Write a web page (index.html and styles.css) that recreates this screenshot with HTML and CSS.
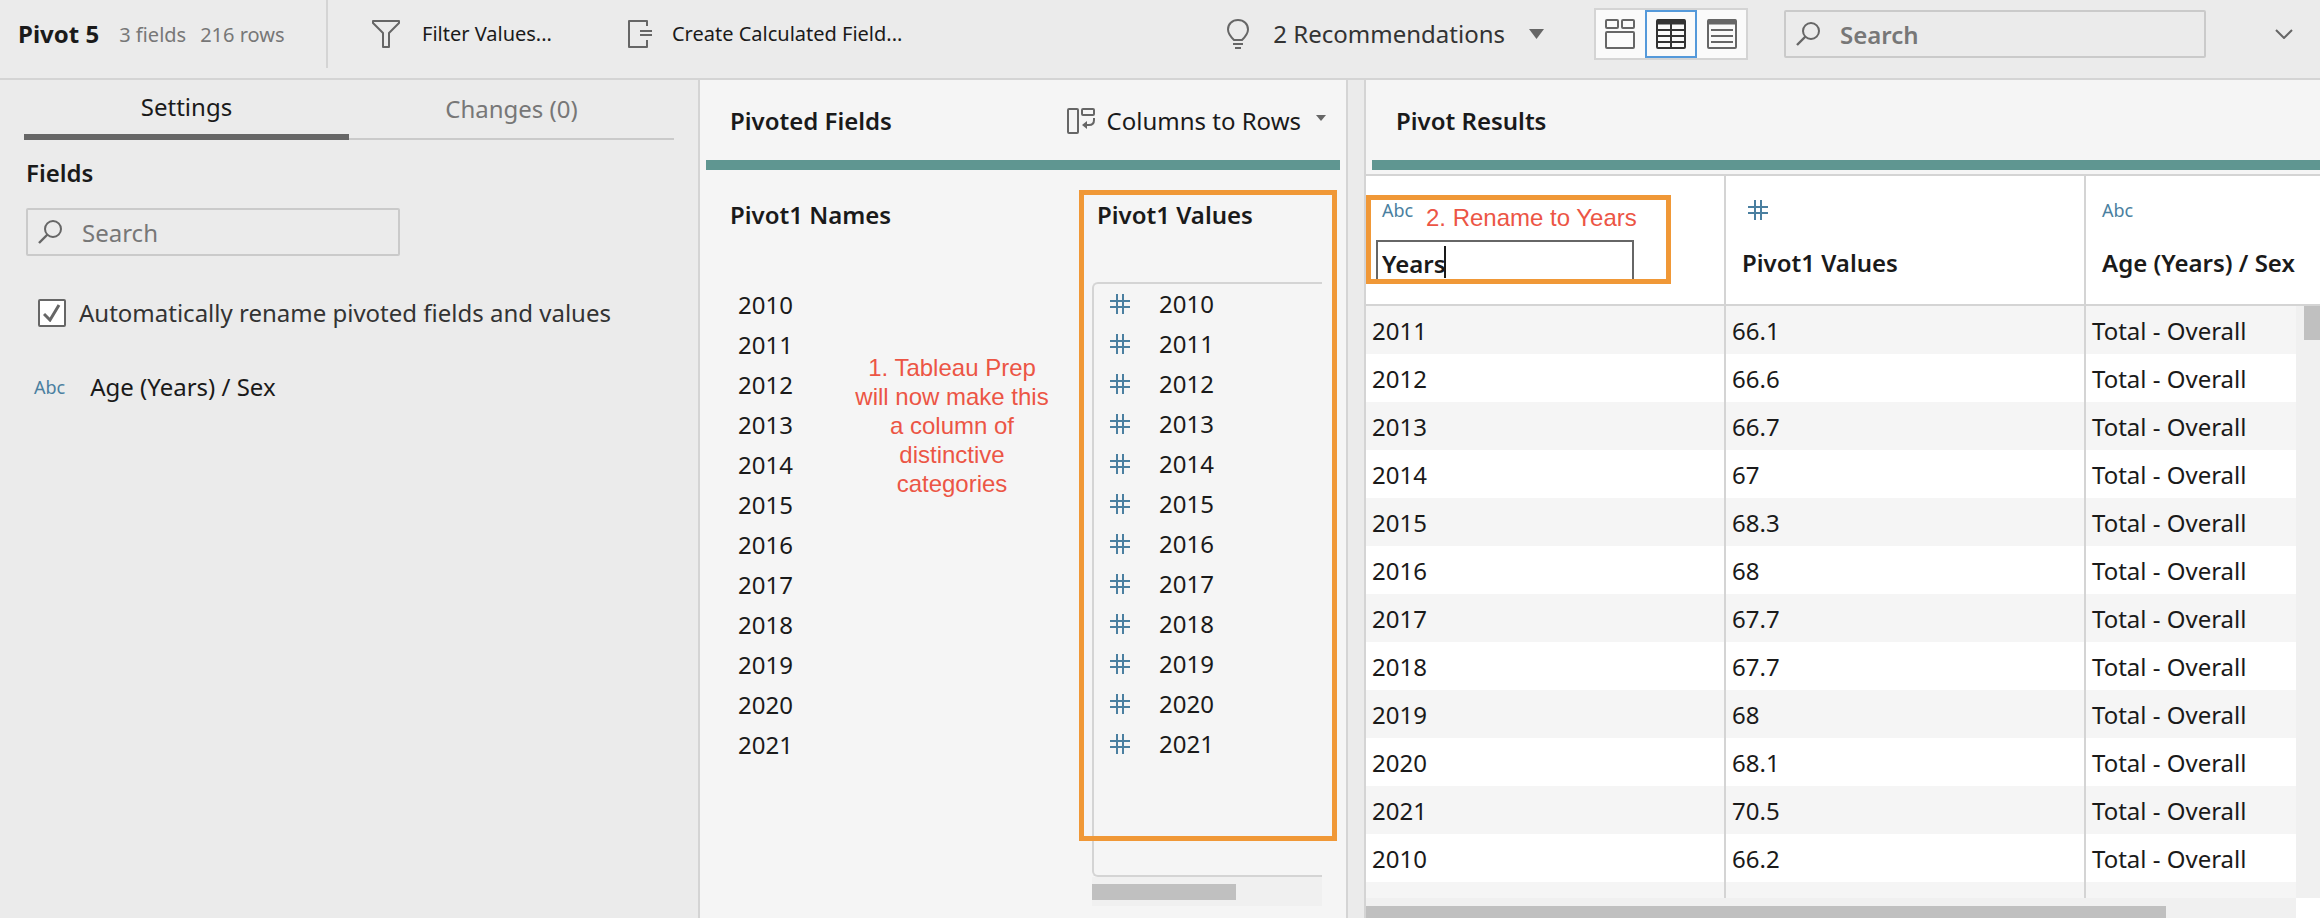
FILE: index.html
```html
<!DOCTYPE html>
<html lang="en">
<head>
<meta charset="utf-8">
<title>Pivot 5</title>
<link rel="stylesheet" href="styles.css">
</head>
<body>
<svg class="defs" aria-hidden="true">
  <symbol id="hash" viewBox="0 0 20 20"><path d="M7 0v20M13 0v20M0 7h20M0 13h20" fill="none" stroke="currentColor" stroke-width="2"/></symbol>
  <symbol id="lens" viewBox="0 0 24 24"><circle cx="15" cy="9" r="8" fill="none" stroke="currentColor" stroke-width="2"/><path d="M9.5 14.5 1 23" stroke="currentColor" stroke-width="2.4"/></symbol>
</svg>

<header class="toolbar">
  <div class="summary">
    <h1 class="title">Pivot 5</h1>
    <span class="stat">3 fields</span>
    <span class="stat">216 rows</span>
  </div>
  <button class="tool tool-filter" type="button">
    <svg width="28" height="28" viewBox="0 0 28 28" fill="none" stroke="currentColor" stroke-width="2" stroke-linejoin="round"><path d="M1 1h26v2L17 13v14h-6V13L1 3z"/></svg>
    Filter Values...
  </button>
  <button class="tool tool-calc" type="button">
    <svg width="24" height="28" viewBox="0 0 24 28" fill="none" stroke="currentColor" stroke-width="2" stroke-linejoin="round"><path d="M19 6V1H1v26h18v-7M12 11h12M12 15h12"/></svg>
    Create Calculated Field...
  </button>
  <div class="toolbar-right">
    <button class="tool recommend" type="button">
      <svg width="22" height="30" viewBox="0 0 22 30" fill="none" stroke="currentColor" stroke-width="2"><path d="M7 21C4 18 1 15 1 10.500C1 5 5 1 11 1s10 4 10 9.500C21 15 18 18 15 21zM6 25h10M8 29h6"/></svg>
      2 Recommendations
      <svg class="caret" width="15" height="10" viewBox="0 0 15 10"><path d="M0 0h15L7.500 10z" fill="currentColor"/></svg>
    </button>
    <div class="views">
      <button class="view" type="button" aria-label="Profile view">
        <svg width="30" height="30" viewBox="0 0 30 30" fill="none" stroke="currentColor" stroke-width="2"><rect x="1" y="1" width="12" height="8" rx="1"/><rect x="17" y="1" width="12" height="8" rx="1"/><rect x="1" y="13" width="28" height="16" rx="1"/></svg>
      </button>
      <button class="view view-active" type="button" aria-label="Grid view">
        <svg width="30" height="30" viewBox="0 0 30 30" fill="none" stroke="currentColor" stroke-width="2"><rect x="1" y="1" width="28" height="28" rx="1"/><path d="M1 3h28" stroke-width="5"/><path d="M15 4v25M1 11h28M1 17h28M1 23h28"/></svg>
      </button>
      <button class="view" type="button" aria-label="List view">
        <svg width="30" height="30" viewBox="0 0 30 30" fill="none" stroke="currentColor" stroke-width="2"><rect x="1" y="1" width="28" height="28" rx="1"/><path d="M1 3h28" stroke-width="5"/><path d="M4 11h22M4 17h22M4 23h22"/></svg>
      </button>
    </div>
    <label class="search search-main">
      <svg width="24" height="24"><use href="#lens"/></svg>
      <input type="text" placeholder="Search" aria-label="Search results">
    </label>
    <button class="tool collapse" type="button" aria-label="Collapse">
      <svg width="18" height="10" viewBox="0 0 18 10" fill="none" stroke="currentColor" stroke-width="2"><path d="m1 1 8 8 8-8"/></svg>
    </button>
  </div>
</header>

<main class="workspace">
  <aside class="settings">
    <div class="tabs" role="tablist">
      <button class="tab tab-active" type="button" role="tab" aria-selected="true">Settings</button>
      <button class="tab" type="button" role="tab" aria-selected="false">Changes (0)</button>
    </div>
    <div class="settings-body">
      <h2 class="heading">Fields</h2>
      <label class="search search-fields">
        <svg width="24" height="24"><use href="#lens"/></svg>
        <input type="text" placeholder="Search" aria-label="Search fields">
      </label>
      <label class="option">
        <span class="tick">
          <input type="checkbox" checked>
          <svg width="18" height="18" viewBox="0 0 18 18" fill="none" stroke="currentColor" stroke-width="3"><path d="m1 10 6 6L16 1"/></svg>
        </span>
        Automatically rename pivoted fields and values
      </label>
      <div class="field"><span class="type">Abc</span><span>Age (Years) / Sex</span></div>
    </div>
  </aside>

  <section class="pivoted">
    <div class="panel-head">
      <h2 class="heading">Pivoted Fields</h2>
      <button class="tool direction" type="button">
        <svg width="28" height="26" viewBox="0 0 28 26" fill="none" stroke="currentColor" stroke-width="2"><rect x="1" y="1" width="10" height="24" rx="1"/><rect x="15" y="1" width="12" height="6" rx="1"/><path d="M27 10v2q0 5-5 5h-4"/><path d="m20 13-5 4 5 4z" fill="currentColor" stroke="none"/></svg>
        Columns to Rows
        <svg class="caret-small" width="10" height="6" viewBox="0 0 10 6"><path d="M0 0h10L5 6z" fill="currentColor"/></svg>
      </button>
    </div>
    <div class="bar"></div>
    <div class="pivot-columns">
      <div class="names">
        <h3 class="heading">Pivot1 Names</h3>
        <ul class="list">
          <li>2010</li><li>2011</li><li>2012</li><li>2013</li><li>2014</li><li>2015</li>
          <li>2016</li><li>2017</li><li>2018</li><li>2019</li><li>2020</li><li>2021</li>
        </ul>
        <p class="note note-names">1. Tableau Prep will now make this a column of distinctive categories</p>
      </div>
      <div class="values">
        <h3 class="heading">Pivot1 Values</h3>
        <ul class="list list-box">
          <li><svg class="num"><use href="#hash"/></svg>2010</li>
          <li><svg class="num"><use href="#hash"/></svg>2011</li>
          <li><svg class="num"><use href="#hash"/></svg>2012</li>
          <li><svg class="num"><use href="#hash"/></svg>2013</li>
          <li><svg class="num"><use href="#hash"/></svg>2014</li>
          <li><svg class="num"><use href="#hash"/></svg>2015</li>
          <li><svg class="num"><use href="#hash"/></svg>2016</li>
          <li><svg class="num"><use href="#hash"/></svg>2017</li>
          <li><svg class="num"><use href="#hash"/></svg>2018</li>
          <li><svg class="num"><use href="#hash"/></svg>2019</li>
          <li><svg class="num"><use href="#hash"/></svg>2020</li>
          <li><svg class="num"><use href="#hash"/></svg>2021</li>
        </ul>
        <div class="track"><div class="thumb"></div></div>
        <div class="frame frame-values"></div>
      </div>
    </div>
  </section>

  <section class="results">
    <div class="panel-head"><h2 class="heading">Pivot Results</h2></div>
    <div class="bar"></div>
    <div class="grid">
      <table class="table">
        <colgroup><col class="col"><col class="col"><col></colgroup>
        <thead>
          <tr>
            <th scope="col">
              <div class="head head-edit">
                <span class="type">Abc</span>
                <span class="rename"><input type="text" value="Years" aria-label="Field name"><span class="cursor"></span></span>
              </div>
              <p class="note note-rename">2. Rename to Years</p>
              <div class="frame frame-rename"></div>
            </th>
            <th scope="col"><div class="head"><span class="type type-num"><svg class="num"><use href="#hash"/></svg></span><span>Pivot1 Values</span></div></th>
            <th scope="col"><div class="head"><span class="type">Abc</span><span>Age (Years) / Sex</span></div></th>
          </tr>
        </thead>
        <tbody>
          <tr><td>2011</td><td>66.1</td><td>Total - Overall</td></tr>
          <tr><td>2012</td><td>66.6</td><td>Total - Overall</td></tr>
          <tr><td>2013</td><td>66.7</td><td>Total - Overall</td></tr>
          <tr><td>2014</td><td>67</td><td>Total - Overall</td></tr>
          <tr><td>2015</td><td>68.3</td><td>Total - Overall</td></tr>
          <tr><td>2016</td><td>68</td><td>Total - Overall</td></tr>
          <tr><td>2017</td><td>67.7</td><td>Total - Overall</td></tr>
          <tr><td>2018</td><td>67.7</td><td>Total - Overall</td></tr>
          <tr><td>2019</td><td>68</td><td>Total - Overall</td></tr>
          <tr><td>2020</td><td>68.1</td><td>Total - Overall</td></tr>
          <tr><td>2021</td><td>70.5</td><td>Total - Overall</td></tr>
          <tr><td>2010</td><td>66.2</td><td>Total - Overall</td></tr>
          <tr><td></td><td></td><td></td></tr>
        </tbody>
      </table>
      <div class="scroll-y"><div class="scroll-y-thumb"></div></div>
    </div>
    <div class="scroll-x"><div class="scroll-x-thumb"></div></div>
  </section>
</main>
</body>
</html>
```
FILE: styles.css
```css
* { box-sizing: border-box; }

body {
  margin: 0;
  height: 100vh;
  display: flex;
  flex-direction: column;
  overflow: hidden;
  background: #ebebeb;
  color: #1a1a1a;
  font-family: "Noto Sans", sans-serif;
  font-size: 24px;
  line-height: 32px;
}

h1, h2, h3, p, ul { margin: 0; padding: 0; }
ul { list-style: none; }
svg { display: block; flex: none; }
button, input { font: inherit; color: inherit; }
button { border: 0; background: none; padding: 0; }

.defs { position: absolute; width: 0; height: 0; }
.heading { font-size: 24px; font-weight: 600; line-height: 32px; }

/* Toolbar */
.toolbar {
  display: flex;
  flex: none;
  height: 80px;
  border-bottom: 2px solid #d4d4d4;
}
.summary {
  display: flex;
  align-items: center;
  gap: 14px;
  width: 328px;
  height: 68px;
  padding-left: 18px;
  border-right: 2px solid #d4d4d4;
}
.title { margin-right: 6px; font-size: 24px; font-weight: 700; }
.stat { padding-top: 2px; font-size: 20px; color: #777; white-space: nowrap; }
.tool {
  display: flex;
  align-items: center;
  height: 68px;
  white-space: nowrap;
}
.tool svg { color: #666; }
.tool-filter, .tool-calc { font-size: 20px; }
.tool-filter { gap: 22px; margin-left: 44px; }
.tool-calc { gap: 20px; margin-left: 76px; }
.toolbar-right {
  display: flex;
  align-items: center;
  height: 68px;
  margin-left: auto;
  padding-right: 27px;
}
.recommend { gap: 24px; color: #333; }
.views {
  display: flex;
  align-items: center;
  width: 154px;
  height: 52px;
  margin-left: 50px;
  border: 2px solid #d4d4d4;
  background: #fafafa;
}
.view {
  display: flex;
  flex: 1;
  align-items: center;
  justify-content: center;
  height: 48px;
  color: #666;
}
.view-active { border: 2px solid #5499da; color: #333; }

.search {
  display: flex;
  align-items: center;
  height: 48px;
  border: 2px solid #cacaca;
  border-radius: 2px;
  color: #666;
}
.search svg { margin-left: 10px; }
.search input {
  flex: 1;
  min-width: 0;
  margin-left: 20px;
  padding: 2px 0 0;
  border: 0;
  outline: 0;
  background: none;
}
.search input::placeholder { color: #777; opacity: 1; }
.search-main { width: 422px; margin-left: 36px; font-weight: 600; }
.collapse { margin-left: 69px; }

/* Workspace */
.workspace {
  display: grid;
  flex: 1;
  grid-template-columns: 698px 650px minmax(0, 1fr);
  min-height: 0;
}

.settings { padding: 0 24px; }
.tabs { display: flex; height: 60px; }
.tab {
  flex: 1;
  padding-bottom: 0;
  border-bottom: 2px solid #cacaca;
  color: #777;
}
.tab-active { border-bottom: 6px solid #666; color: #1a1a1a; }
.settings-body { display: flex; flex-direction: column; align-items: flex-start; padding: 17px 2px; }
.search-fields { width: 374px; margin-top: 19px; }
.option {
  display: flex;
  align-items: center;
  gap: 13px;
  margin: 41px 0 0 12px;
  color: #333;
  white-space: nowrap;
}
.tick { display: grid; place-items: center; color: #666; }
.tick > * { grid-area: 1 / 1; }
.tick input {
  appearance: none;
  width: 28px;
  height: 28px;
  margin: 0;
  border: 2px solid #666;
  border-radius: 2px;
  background: #fff;
}
.tick svg { pointer-events: none; }
.field { display: flex; align-items: center; gap: 25px; margin: 42px 0 0 8px; }
.type { color: #4a7fa0; font-size: 18px; font-weight: 400; }
.num { width: 20px; height: 20px; color: #4a7fa0; }

.pivoted {
  display: flex;
  flex-direction: column;
  border: solid #d4d4d4;
  border-width: 0 2px;
  background: #f5f5f5;
}
.panel-head {
  display: flex;
  flex: none;
  align-items: center;
  justify-content: space-between;
  height: 80px;
  padding: 2px 20px 0 30px;
}
.direction { gap: 12px; }
.caret-small { margin: 0 0 6px 3px; }
.bar { flex: none; height: 10px; margin: 0 6px; background: #5f9691; }
.pivot-columns {
  display: grid;
  flex: 1;
  grid-template-columns: minmax(0, 1fr) 254px;
}
.names, .values {
  display: flex;
  flex-direction: column;
  position: relative;
  padding-top: 29px;
}
.names { padding-left: 30px; }
.names .list { padding: 54px 0 0 8px; }
.list li { display: flex; align-items: center; gap: 29px; height: 40px; }
.values { padding-right: 24px; }
.values .heading { padding-left: 5px; }
.list-box {
  height: 595px;
  margin-top: 51px;
  padding-left: 16px;
  border: 2px solid #d4d4d4;
  border-right: 0;
  border-radius: 6px 0 0 6px;
}
.track { height: 29px; padding-top: 7px; background: #f0f0f0; }
.thumb { width: 144px; height: 16px; background: #c0c0c0; }

/* Callouts */
.note {
  position: absolute;
  color: #ec5545;
  font-family: "Liberation Sans", Arial, sans-serif;
  font-size: 24px;
  font-weight: 400;
  line-height: 29px;
}
.note-names { top: 183px; left: 152px; width: 200px; text-align: center; }
.note-rename { top: 27px; left: 60px; white-space: nowrap; }
.frame { position: absolute; border: 5px solid #f09837; pointer-events: none; }
.frame-values { top: 20px; left: -13px; right: 9px; height: 651px; }
.frame-rename { top: 19px; left: 0; width: 305px; height: 89px; }

/* Results */
.results {
  display: flex;
  flex-direction: column;
  min-width: 0;
  min-height: 0;
  margin-left: 16px;
  border-left: 2px solid #d4d4d4;
  background: #f5f5f5;
}
.results .bar { margin-right: 0; }
.grid {
  position: relative;
  flex: 1;
  min-height: 0;
  margin-top: 4px;
  overflow: hidden;
  border-top: 2px solid #d4d4d4;
  background: #fff;
}
.table {
  width: 100%;
  table-layout: fixed;
  border-collapse: separate;
  border-spacing: 0;
}
.col { width: 360px; }
.table th, .table td { text-align: left; border-right: 2px solid #d4d4d4; }
.table th:last-child, .table td:last-child { border-right: 0; }
.table th {
  position: relative;
  height: 130px;
  padding: 0 0 0 16px;
  border-bottom: 2px solid #d4d4d4;
  font-weight: 600;
  vertical-align: top;
  white-space: nowrap;
}
.table td { height: 48px; padding: 2px 0 0 6px; }
.table tbody tr:nth-child(odd) { background: #f5f5f5; }
.head { display: flex; flex-direction: column; gap: 21px; padding-top: 18px; }
.type-num { display: flex; align-items: center; height: 32px; padding-left: 6px; }
.head-edit { gap: 14px; }
.rename { position: relative; width: 258px; margin-left: -6px; }
.rename input {
  display: block;
  width: 100%;
  height: 42px;
  padding: 4px 4px 0;
  border: 2px solid #666;
  outline: 0;
}
.cursor { position: absolute; top: 6px; left: 68px; width: 2px; height: 32px; background: #1a1a1a; }

.scroll-y {
  position: absolute;
  top: 130px;
  right: 0;
  bottom: 0;
  width: 24px;
  padding-left: 8px;
  background: #f0f0f0;
}
.scroll-y-thumb { height: 34px; background: #c0c0c0; }
.scroll-x {
  flex: none;
  height: 20px;
  padding-top: 8px;
  border-right: 24px solid #fff;
  background: #f0f0f0;
}
.scroll-x-thumb { width: 86%; height: 12px; background: #c0c0c0; }
```
